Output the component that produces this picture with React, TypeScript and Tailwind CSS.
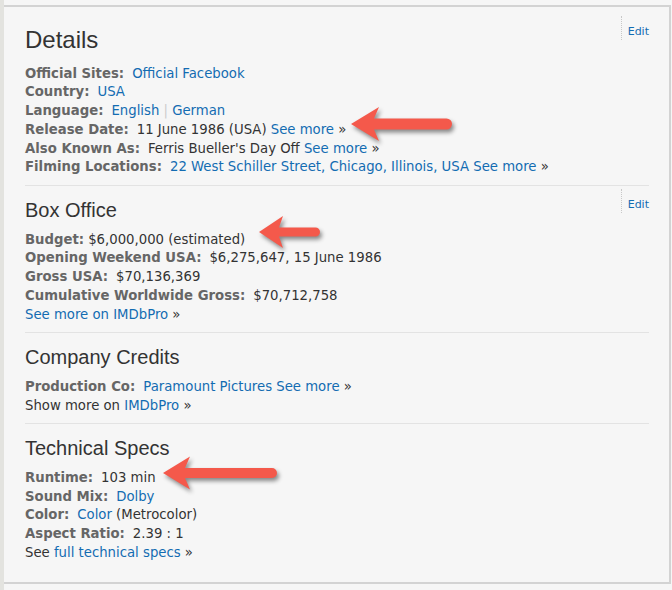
import React from "react";

const A = ({ children }: { children: React.ReactNode }) => (
  <a href="#" className="text-[#136cb2]">
    {children}
  </a>
);

const Row = ({ label, gap = true, children }: { label?: string; gap?: boolean; children: React.ReactNode }) => (
  <div className="whitespace-nowrap">
    {label && <span className={`font-bold text-[#666] ${gap ? "mr-[8px]" : "mr-[4px]"}`}>{label}</span>}
    {children}
  </div>
);

const Section = ({ title, first, last, children }: { title: string; first?: boolean; last?: boolean; children: React.ReactNode }) => (
  <div className={`relative ${first ? "pt-[19px]" : "pt-[12px]"} pb-[8px] ${last ? "" : "border-b border-[#e3e3e3]"}`}>
    <h2
      className={`font-['Liberation_Sans',Arial,sans-serif] text-[#333] ${
        first ? "text-[24px] leading-[28px] mb-[10.5px]" : "text-[20px] leading-[24px] mb-[8.5px]"
      }`}
    >
      {title}
    </h2>
    <div className="leading-[18.75px]">{children}</div>
  </div>
);

export default function App() {
  return (
    <div className="relative w-[672px] h-[590px] overflow-hidden bg-[#f6f6f6] flex font-['DejaVu_Sans',Verdana,sans-serif] text-[13.25px] text-[#333]">
      <div className="w-[4px] shrink-0 bg-[#e3e3df]" />
      <div className="flex-1 pt-[5px] pr-[1px]">
        <div className="relative h-[579px] border-t-2 border-r-2 border-b-2 border-[#d3d3d3] pl-[21px] pr-[20px]">
          <Section title="Details" first>
            <div className="absolute right-[0px] top-[9px] h-[24px] border-l border-dotted border-[#c8c8c8] pl-[6px] pt-[10px] text-[11px] leading-[12px] text-[#136cb2]">
              Edit
            </div>
            <Row label="Official Sites:">
              <A>Official Facebook</A>
            </Row>
            <Row label="Country:">
              <A>USA</A>
            </Row>
            <Row label="Language:">
              <A>English</A>
              <span className="text-[#ccc]"> | </span>
              <A>German</A>
            </Row>
            <Row label="Release Date:">
              11 June 1986 (USA) <A>See more</A> »
            </Row>
            <Row label="Also Known As:">
              Ferris Bueller's Day Off <A>See more</A> »
            </Row>
            <Row label="Filming Locations:">
              <A>22 West Schiller Street, Chicago, Illinois, USA</A> <A>See more</A> »
            </Row>
          </Section>
          <Section title="Box Office">
            <div className="absolute right-[0px] top-[3px] h-[24px] border-l border-dotted border-[#c8c8c8] pl-[6px] pt-[10px] text-[11px] leading-[12px] text-[#136cb2]">
              Edit
            </div>
            <Row label="Budget:" gap={false}>
              $6,000,000 (estimated)
            </Row>
            <Row label="Opening Weekend USA:">$6,275,647, 15 June 1986</Row>
            <Row label="Gross USA:">$70,136,369</Row>
            <Row label="Cumulative Worldwide Gross:">$70,712,758</Row>
            <Row>
              <A>See more on IMDbPro</A> »
            </Row>
          </Section>
          <Section title="Company Credits">
            <Row label="Production Co:">
              <A>Paramount Pictures</A> <A>See more</A> »
            </Row>
            <Row>
              Show more on <A>IMDbPro</A> »
            </Row>
          </Section>
          <Section title="Technical Specs" last>
            <Row label="Runtime:">103 min</Row>
            <Row label="Sound Mix:">
              <A>Dolby</A>
            </Row>
            <Row label="Color:">
              <A>Color</A> (Metrocolor)
            </Row>
            <Row label="Aspect Ratio:">2.39 : 1</Row>
            <Row>
              See <A>full technical specs</A> »
            </Row>
          </Section>
        </div>
      </div>

      {/* red callout arrows */}
      <svg
        className="absolute left-[350px] top-[106px] drop-shadow-[2px_3px_2px_rgba(0,0,0,0.45)]"
        width="108"
        height="40"
        viewBox="0 0 108 40"
      >
        <path d="M1,18 L29,1 L24,12.5 L96.5,12.5 A5.5,5.5 0 0 1 96.5,23.5 L24,23.5 L29,35 Z" fill="#f4594b" />
      </svg>
      <svg
        className="absolute left-[258px] top-[215px] drop-shadow-[2px_3px_2px_rgba(0,0,0,0.45)]"
        width="68"
        height="38"
        viewBox="0 0 68 38"
      >
        <path d="M1,17 L25,1 L21,12.5 L57.5,12.5 A4.5,4.5 0 0 1 57.5,21.5 L21,21.5 L25,33 Z" fill="#f4594b" />
      </svg>
      <svg
        className="absolute left-[162px] top-[455px] drop-shadow-[2px_3px_2px_rgba(0,0,0,0.45)]"
        width="122"
        height="40"
        viewBox="0 0 122 40"
      >
        <path d="M1,18 L28,1.5 L23,13 L110,13 A5,5 0 0 1 110,23 L23,23 L28,34.5 Z" fill="#f4594b" />
      </svg>
    </div>
  );
}
